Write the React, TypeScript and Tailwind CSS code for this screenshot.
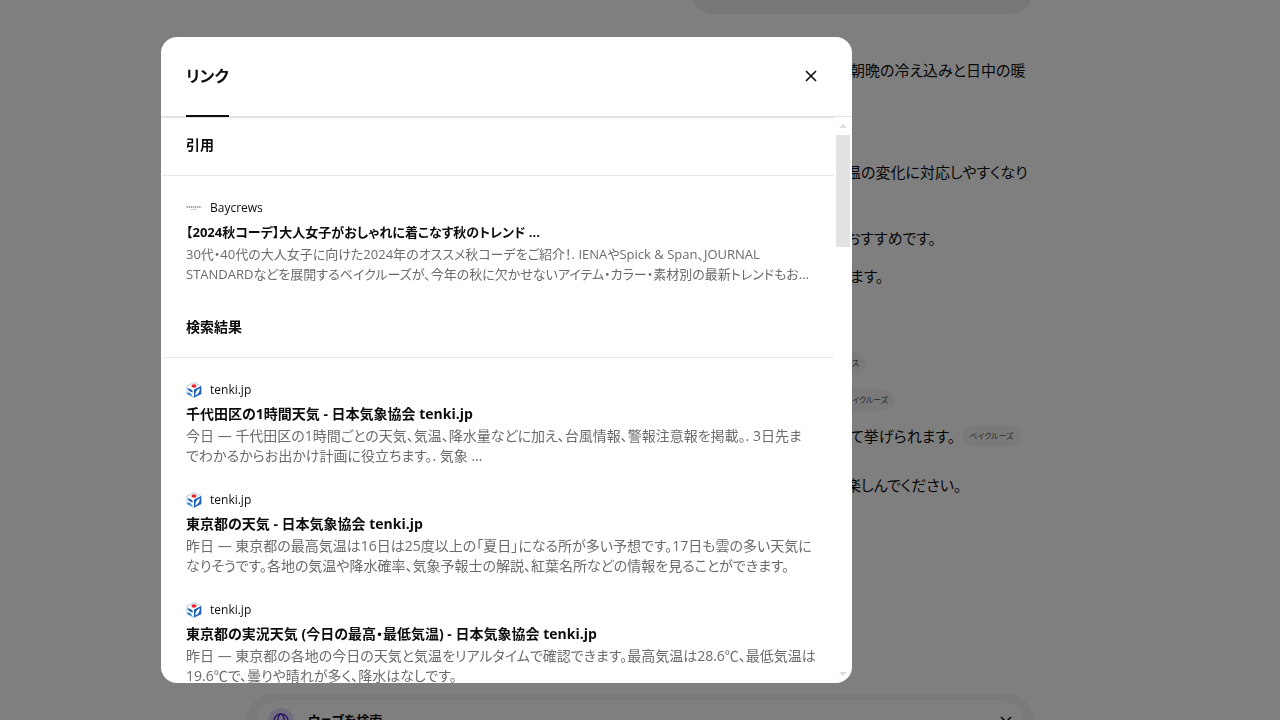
import { useState } from "react";

type Result = {
  site: string;
  title: string;
  lines: string[];
};

const citations: Result[] = [
  {
    site: "Baycrews",
    title: "【2024秋コーデ】大人女子がおしゃれに着こなす秋のトレンド ...",
    lines: [
      "30代・40代の大人女子に向けた2024年のオススメ秋コーデをご紹介！. IENAやSpick & Span、JOURNAL",
      "STANDARDなどを展開するベイクルーズが、今年の秋に欠かせないアイテム・カラー・素材別の最新トレンドもお...",
    ],
  },
];

const results: Result[] = [
  {
    site: "tenki.jp",
    title: "千代田区の1時間天気 - 日本気象協会 tenki.jp",
    lines: [
      "今日 — 千代田区の1時間ごとの天気、気温、降水量などに加え、台風情報、警報注意報を掲載。. 3日先ま",
      "でわかるからお出かけ計画に役立ちます。. 気象 ...",
    ],
  },
  {
    site: "tenki.jp",
    title: "東京都の天気 - 日本気象協会 tenki.jp",
    lines: [
      "昨日 — 東京都の最高気温は16日は25度以上の「夏日」になる所が多い予想です。17日も雲の多い天気に",
      "なりそうです。各地の気温や降水確率、気象予報士の解説、紅葉名所などの情報を見ることができます。",
    ],
  },
  {
    site: "tenki.jp",
    title: "東京都の実況天気 (今日の最高・最低気温) - 日本気象協会 tenki.jp",
    lines: [
      "昨日 — 東京都の各地の今日の天気と気温をリアルタイムで確認できます。最高気温は28.6℃、最低気温は",
      "19.6℃で、曇りや晴れが多く、降水はなしです。",
    ],
  },
];

function TenkiIcon() {
  return (
    <svg viewBox="0 0 16 16" className="size-4 shrink-0" aria-hidden="true">
      <path d="M8 .5 15 4v8l-7 3.600L1 12V4z" fill="#fff" stroke="#9dbbdd" strokeWidth=".8" />
      <path d="M8 7.600 15.200 4v8L8 15.600z" fill="#1c5fb8" />
      <path d="M9.300 13.600c-.2-3 1.300-5.800 4.500-7.300.1 3-1.300 5.900-4.500 7.300z" fill="#fff" />
      <path d="M1.300 6.200c2.300.1 4 .9 5.300 2.700l.4 1.500c-2.600-.2-4.500-1.500-5.700-4.200z" fill="#1c5fb8" />
      <path d="m1.300 10.600 2.700.2 3 4L1.300 12z" fill="#2f86d6" />
      <ellipse cx="8" cy="4" rx="2.600" ry="1.800" fill="#e8232b" />
    </svg>
  );
}

function BaycrewsIcon() {
  return (
    <svg viewBox="0 0 16 16" className="size-4 shrink-0" aria-hidden="true">
      <path d="M.5 7h15" stroke="#8a8a8a" strokeWidth="1.500" strokeDasharray="1.400 .7" />
      <path d="M5 9.500h6" stroke="#b8b8b8" strokeWidth="1" strokeDasharray="1 .5" />
    </svg>
  );
}

function ResultItem({ result, compact }: { result: Result; compact?: boolean }) {
  return (
    <a href="#" className={`block px-6 py-3 ${compact ? "text-[13px]" : "text-sm"}`}>
      <div className="flex h-5 items-center gap-2 text-xs text-[#0d0d0d]">
        {result.site === "tenki.jp" ? <TenkiIcon /> : <BaycrewsIcon />}
        <span>{result.site}</span>
      </div>
      <h3 className="mt-1 leading-5 font-bold whitespace-nowrap text-[#0d0d0d]">{result.title}</h3>
      <p className="mt-0.5 leading-5 whitespace-nowrap text-[#6b6b6b]">
        {result.lines[0]}
        <br />
        {result.lines[1]}
      </p>
    </a>
  );
}

function Section({ heading, items, compact }: { heading: string; items: Result[]; compact?: boolean }) {
  return (
    <section>
      <h2 className="border-b border-[#e8e8e8] px-6 pt-4 pb-5 text-sm leading-[21px] font-bold">{heading}</h2>
      <div className="pt-2.5 pb-1">
        {items.map((r) => (
          <ResultItem key={r.title} result={r} compact={compact} />
        ))}
      </div>
    </section>
  );
}

function Pill({ label }: { label: string }) {
  return <span className="rounded-full bg-[#f4f4f4] px-1.5 text-[8px] leading-[22px] text-[#555]">{label}</span>;
}

function Conversation() {
  return (
    <main className="mx-auto flex h-screen max-w-[788px] flex-col">
      <div className="flex h-3.5 w-[344px] shrink-0 items-end self-end overflow-hidden">
        <div className="h-12 w-full shrink-0 rounded-3xl bg-[#efefef]" />
      </div>
      <div className="flex w-[188px] grow flex-col self-end text-[15px] leading-6 whitespace-nowrap">
        <p className="mt-11 pl-1">朝晩の冷え込みと日中の暖</p>
        <p className="mt-[78px]">温の変化に対応しやすくなり</p>
        <p className="mt-[42px]">おすすめです。</p>
        <p className="mt-3.5 pl-1">ます。</p>
        <p className="mt-[63px] flex h-6 items-center">
          <Pill label="ス" />
        </p>
        <p className="mt-[13px] flex h-6 items-center">
          <Pill label="イクルーズ" />
        </p>
        <p className="mt-3 flex items-center gap-2 pl-1">
          て挙げられます。
          <Pill label="ベイクルーズ" />
        </p>
        <p className="mt-[25px]">楽しんでください。</p>
      </div>
      <div className="h-[26px] shrink-0 overflow-hidden rounded-t-[28px] bg-[#f4f4f4] px-2.5 pt-1.5">
        <div className="flex items-start justify-between rounded-t-3xl bg-white px-3 pt-2">
          <div className="flex items-start gap-3.5">
            <span className="flex size-[26px] items-center justify-center rounded-full bg-[#e6dcfa]">
              <svg viewBox="0 0 16 16" className="size-4" fill="none" stroke="#5a2fc2" strokeWidth="1.500">
                <circle cx="8" cy="8" r="7" />
                <ellipse cx="8" cy="8" rx="3.200" ry="7" />
                <path d="M1 8h14" />
              </svg>
            </span>
            <span className="text-[13px] leading-6 font-bold">ウェブを検索</span>
          </div>
          <button type="button" aria-label="検索を解除" className="mt-2">
            <svg viewBox="0 0 12 12" className="size-3" stroke="#0d0d0d" strokeWidth="1.500">
              <path d="m1 1 10 10M11 1 1 11" />
            </svg>
          </button>
        </div>
      </div>
    </main>
  );
}

export default function App() {
  const [open, setOpen] = useState(true);

  return (
    <div className="h-screen overflow-hidden bg-white font-['Open_Sans','Noto_Sans_CJK_JP',sans-serif] text-[#0d0d0d] [font-feature-settings:'palt']">
      <Conversation />
      {open && (
        <div className="fixed inset-0 flex bg-black/50 py-[37px] pl-[161px]">
          <div role="dialog" aria-label="リンク" className="flex w-full max-w-[691px] flex-col overflow-hidden rounded-2xl bg-white">
            <header className="flex h-20 shrink-0 items-stretch justify-between border-b border-[#e3e3e3] pr-8 pb-px pl-[25px]">
              <h1 className="-mb-0.5 flex items-center border-b-2 border-[#0d0d0d] font-semibold">リンク</h1>
              <button type="button" aria-label="閉じる" onClick={() => setOpen(false)}>
                <svg viewBox="0 0 18 18" className="size-[18px]" fill="none" stroke="#0d0d0d" strokeWidth="1.600">
                  <path d="m4 4 10 10M14 4 4 14" />
                </svg>
              </button>
            </header>
            <div className="flex min-h-0 grow">
              <div className="min-w-0 grow overflow-hidden border-t border-[#e3e3e3] pl-px">
                <Section heading="引用" items={citations} compact />
                <Section heading="検索結果" items={results} />
              </div>
              <div className="flex w-[18px] shrink-0 flex-col items-center justify-between py-[7px]">
                <div className="flex w-3.5 flex-col items-center gap-[7px]">
                  <svg viewBox="0 0 8 4" className="h-1 w-2" fill="#dcdcdc">
                    <path d="M4 0 8 4H0z" />
                  </svg>
                  <div className="h-28 w-full bg-[#e2e2e2]" />
                </div>
                <svg viewBox="0 0 8 4" className="h-1 w-2" fill="#dcdcdc">
                  <path d="M0 0h8L4 4z" />
                </svg>
              </div>
            </div>
          </div>
        </div>
      )}
    </div>
  );
}
